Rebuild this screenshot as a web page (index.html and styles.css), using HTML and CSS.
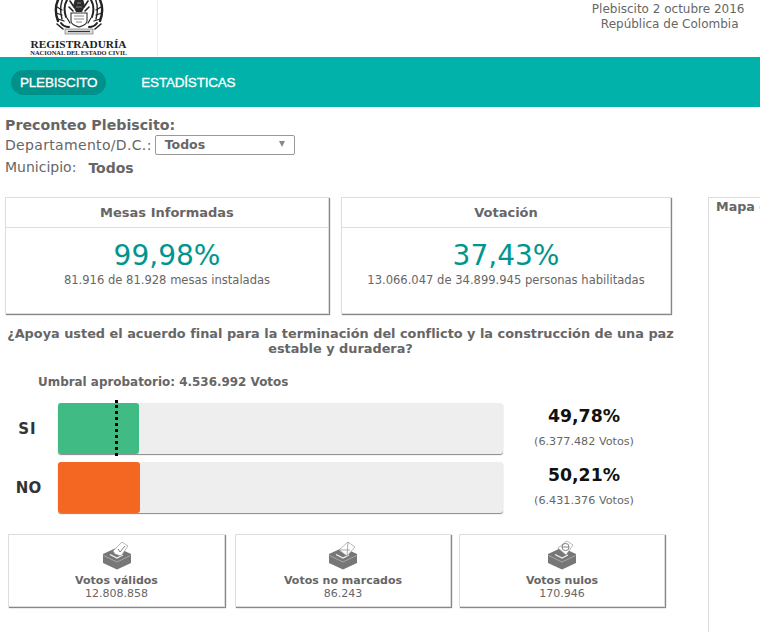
FILE: index.html
```html
<!DOCTYPE html>
<html lang="es">
<head>
    <meta charset="UTF-8">
    <meta name="viewport" content="width=device-width, initial-scale=1.0">
    <title>Preconteo Plebiscito</title>
    <link rel="stylesheet" href="styles.css">
</head>
<body>
    <svg class="defs" width="0" height="0">
        <symbol id="urna" viewBox="0 0 30 30">
            <path d="M1 14 L15 7.5 L29 14 V23 L15 29.5 L1 23 Z" fill="#777"/>
            <path d="M1.5 15.5 L15 22 L28.5 15.5" fill="none" stroke="#bbb" stroke-width="0.7"/>
            <path d="M8 14.5 L15 18 L21 15" fill="none" stroke="#f2f2f2" stroke-width="1.3"/>
        </symbol>
        <symbol id="crest-side" viewBox="0 0 50 36">
            <g fill="none" stroke="#222" stroke-linecap="round">
                <path d="M5 -2 C1 5 1 13 4 21" stroke-width="2.4"/>
                <path d="M9 -2 C6 5 6 12 8 19" stroke-width="1.4"/>
                <path d="M13 0 C10 5 10 11 12 17" stroke-width="2"/>
                <path d="M3 7 L8 10 M2 13 L8 15 M4 19 L10 21" stroke-width="1.3"/>
                <path d="M7 23 C9 26 12 27 15 27" stroke-width="2"/>
                <path d="M3 24 L9 29" stroke-width="1.6"/>
                <path d="M16 1 L20 7 M15 7 L19 11" stroke-width="1.6"/>
                <path d="M13 18 L16 23" stroke-width="1.2"/>
            </g>
        </symbol>
    </svg>

    <header class="header">
        <div class="logo">
            <svg class="crest" width="50" height="36" viewBox="0 0 50 36">
                <use href="#crest-side"/>
                <use href="#crest-side" transform="matrix(-1 0 0 1 50 0)"/>
                <path d="M21 -1 H29 L31 6 L28 12 H22 L19 6 Z" fill="#2b2b2b"/>
                <path d="M23 3 H27 M22 7 H28" stroke="#aaa" stroke-width="0.7"/>
                <path d="M17 13 H33 V21 C33 25 28 26 25 27 C22 26 17 25 17 21 Z" fill="#fff" stroke="#333" stroke-width="1.1"/>
                <path d="M20 16 H30 M20 19 H30 M22 22 H28" stroke="#888" stroke-width="1"/>
                <rect x="11" y="29" width="28" height="5" fill="#ddd" stroke="#666" stroke-width="0.6"/>
                <path d="M14 31.5 H36" stroke="#333" stroke-width="1.2"/>
            </svg>
            <div class="logo-name">REGISTRADURÍA</div>
            <div class="logo-sub">NACIONAL DEL ESTADO CIVIL</div>
        </div>
        <div class="header-title">
            <div>Plebiscito 2 octubre 2016</div>
            <div>República de Colombia</div>
        </div>
    </header>

    <nav class="nav">
        <a class="nav-item active">PLEBISCITO</a>
        <a class="nav-item">ESTADÍSTICAS</a>
    </nav>

    <div class="filters">
        <div class="filters-title">Preconteo Plebiscito:</div>
        <div class="filter-row">
            <span class="filter-label">Departamento/D.C.:</span>
            <div class="select"><span>Todos</span><i class="arrow"></i></div>
        </div>
        <div class="filter-row municipio">
            <span>Municipio:</span>
            <b>Todos</b>
        </div>
    </div>

    <div class="content">
        <main class="results">
            <div class="cards">
                <section class="card card-a">
                    <h3>Mesas Informadas</h3>
                    <div class="big">99,98%</div>
                    <p>81.916 de 81.928 mesas instaladas</p>
                </section>
                <section class="card card-b">
                    <h3>Votación</h3>
                    <div class="big">37,43%</div>
                    <p>13.066.047 de 34.899.945 personas habilitadas</p>
                </section>
            </div>

            <h2 class="question">¿Apoya usted el acuerdo final para la terminación del conflicto y la construcción de una paz estable y duradera?</h2>
            <div class="umbral">Umbral aprobatorio: 4.536.992 Votos</div>

            <div class="vote">
                <div class="vote-name si-name">SI</div>
                <div class="bar">
                    <div class="fill si" style="width: 18.2%"></div>
                    <div class="threshold"></div>
                </div>
                <div class="vote-data"><b>49,78%</b><span>(6.377.482 Votos)</span></div>
            </div>
            <div class="vote">
                <div class="vote-name">NO</div>
                <div class="bar">
                    <div class="fill no" style="width: 18.4%"></div>
                </div>
                <div class="vote-data"><b>50,21%</b><span>(6.431.376 Votos)</span></div>
            </div>

            <div class="totals">
                <section class="total total-a">
                    <svg class="urna" width="30" height="30" viewBox="0 0 30 30">
                        <use href="#urna"/>
                        <path d="M11 11 L20 2 L26 6 L19 16 L13 14 Z" fill="#fff" stroke="#999" stroke-width="0.7"/>
                        <path d="M16 9 L18 12 L23 6" fill="none" stroke="#666" stroke-width="0.8"/>
                    </svg>
                    <b>Votos válidos</b>
                    <span>12.808.858</span>
                </section>
                <section class="total total-b">
                    <svg class="urna" width="30" height="30" viewBox="0 0 30 30">
                        <use href="#urna"/>
                        <path d="M11 10 L20 2 L27 7 L19 16 Z" fill="#fff" stroke="#999" stroke-width="0.7"/>
                        <path d="M11 10 L22 10 M20 2 L19 16" fill="none" stroke="#888" stroke-width="0.7"/>
                    </svg>
                    <b>Votos no marcados</b>
                    <span>86.243</span>
                </section>
                <section class="total total-c">
                    <svg class="urna" width="30" height="30" viewBox="0 0 30 30">
                        <use href="#urna"/>
                        <path d="M11 8 L20 1 L26 5 L19 15 Z" fill="#fff" stroke="#999" stroke-width="0.7"/>
                        <circle cx="18.5" cy="7" r="3.6" fill="none" stroke="#666" stroke-width="0.8"/>
                        <path d="M15 7 H22" stroke="#666" stroke-width="0.8"/>
                    </svg>
                    <b>Votos nulos</b>
                    <span>170.946</span>
                </section>
            </div>
        </main>

        <aside class="map">
            <h3>Mapa de Colombia</h3>
        </aside>
    </div>
</body>
</html>
```

FILE: styles.css
```css
html, body {
    height: 632px;
    overflow: hidden;
}

body {
    margin: 0;
    font-family: "DejaVu Sans", Verdana, sans-serif;
    color: #666;
    background-color: #fff;
}

.defs {
    position: absolute;
}

.header {
    display: flex;
    height: 57px;
}

.logo {
    width: 157px;
    border-right: 1px solid #eee;
    display: flex;
    flex-direction: column;
    align-items: center;
    font-family: "Liberation Serif", serif;
    font-weight: bold;
    color: #222;
    line-height: 1;
}

.crest {
    display: block;
    flex: none;
}

.logo-name {
    margin-top: 3px;
    font-size: 11.3px;
}

.logo-sub {
    font-size: 6.4px;
}

.header-title {
    flex: 1;
    padding: 2px 15.5px 0 0;
    font-size: 12px;
    line-height: 15px;
    text-align: right;
}

.header-title div:last-child {
    padding-right: 6px;
}

.nav {
    height: 50px;
    background-color: #00b2a9;
    display: flex;
    align-items: center;
    padding-left: 11px;
    gap: 26px;
}

.nav-item {
    padding: 0 9px;
    height: 25px;
    line-height: 25px;
    border-radius: 13px;
    font-family: "Liberation Sans", Arial, sans-serif;
    font-size: 13.5px;
    color: #fff;
    -webkit-text-stroke: 0.3px #fff;
    letter-spacing: -0.2px;
}

.nav-item.active {
    background-color: #00918b;
}

.filters {
    height: 90px;
    padding: 9px 0 0 5px;
    box-sizing: border-box;
    font-size: 14px;
}

.filters-title {
    font-weight: bold;
    font-size: 14.2px;
    line-height: 18px;
}

.filter-row {
    display: flex;
    align-items: center;
    gap: 3px;
    height: 21px;
    line-height: 21px;
}

.filter-label {
    padding-top: 2px;
    letter-spacing: 0.33px;
}

.select {
    width: 140px;
    height: 20px;
    margin-top: 1px;
    border: 1px solid #999;
    border-radius: 2px;
    box-sizing: border-box;
    display: flex;
    align-items: center;
    justify-content: space-between;
    padding: 0 9px 2px;
    font-size: 12.5px;
    font-weight: bold;
}

.arrow {
    border-left: 3.5px solid transparent;
    border-right: 3.5px solid transparent;
    border-top: 6px solid #888;
}

.municipio {
    gap: 12px;
    margin-top: 2px;
}

.municipio b {
    font-size: 14px;
    padding-top: 2px;
}

.content {
    display: flex;
    align-items: flex-start;
}

.results {
    width: 708px;
    flex: none;
}

.cards {
    display: flex;
    padding-left: 5px;
}

.card {
    height: 117px;
    box-sizing: border-box;
    border: 1px solid #ddd;
    box-shadow: 1px 1px 1px #888;
    text-align: center;
}

.card-a {
    width: 324px;
    margin-right: 12px;
}

.card-b {
    width: 330px;
}

.card h3 {
    margin: 0;
    height: 30px;
    line-height: 29px;
    box-sizing: border-box;
    border-bottom: 1px solid #ddd;
    font-size: 13px;
}

.big {
    margin-top: 13px;
    font-size: 28px;
    line-height: 30px;
    color: #00968f;
}

.card p {
    margin: 2px 0 0;
    font-size: 11.55px;
    line-height: 14px;
}

.question {
    margin: 12px 0 0;
    width: 681px;
    font-size: 12.87px;
    line-height: 15px;
    text-align: center;
}

.umbral {
    margin: 19px 0 0 38px;
    height: 28px;
    font-size: 11.95px;
    font-weight: bold;
    line-height: 15px;
}

.vote {
    display: flex;
    align-items: center;
    height: 51px;
    margin-bottom: 8px;
}

.vote-name {
    width: 58px;
    padding-right: 1px;
    box-sizing: border-box;
    text-align: center;
    font-size: 15px;
    font-weight: bold;
    color: #333;
}

.si-name {
    letter-spacing: 1px;
    padding-right: 3px;
}

.bar {
    position: relative;
    width: 445px;
    height: 51px;
    background-color: #eee;
    border-radius: 3px;
    box-shadow: 0 1px 1px #888;
}

.fill {
    height: 100%;
    border-radius: 3px;
}

.fill.si {
    background-color: #41bb84;
}

.fill.no {
    background-color: #f46723;
}

.threshold {
    position: absolute;
    left: 57px;
    top: -3px;
    height: 56px;
    border-left: 3px dotted #000;
}

.vote-data {
    width: 162px;
    height: 51px;
    padding-top: 2px;
    box-sizing: border-box;
    display: flex;
    flex-direction: column;
    align-items: center;
}

.vote-data b {
    font-size: 17.3px;
    line-height: 22px;
    color: #111;
}

.vote-data span {
    margin-top: 8px;
    font-size: 11.2px;
    line-height: 14px;
}

.totals {
    display: flex;
    margin: 21px 0 0 8px;
}

.total {
    height: 73px;
    box-sizing: border-box;
    border: 1px solid #ddd;
    box-shadow: 1px 1px 1px #888;
    display: flex;
    flex-direction: column;
    align-items: center;
    font-size: 11px;
    line-height: 13px;
}

.total-a {
    width: 217px;
    margin-right: 10px;
}

.total-b {
    width: 216px;
    margin-right: 8px;
}

.total-c {
    width: 206px;
}

.urna {
    display: block;
    margin-top: 5px;
    margin-bottom: 4px;
}

.map {
    flex: none;
    width: 52px;
    height: 436px;
    border: 1px solid #ddd;
    border-right: none;
    box-sizing: border-box;
    overflow: hidden;
    white-space: nowrap;
}

.map h3 {
    margin: 0;
    padding-left: 7px;
    font-size: 12.7px;
    line-height: 18px;
}
```
